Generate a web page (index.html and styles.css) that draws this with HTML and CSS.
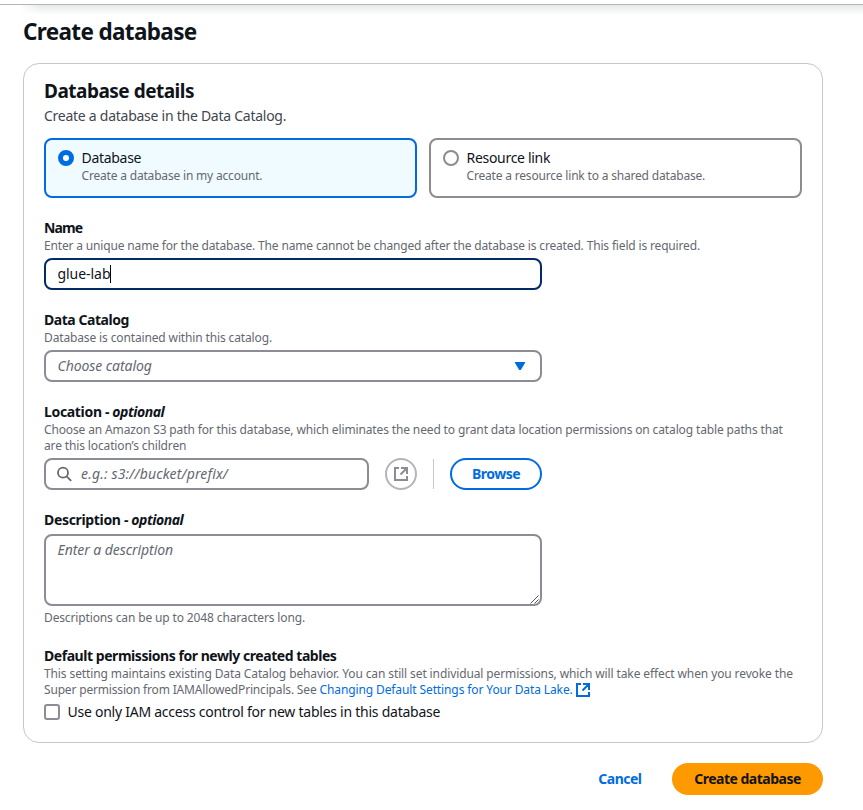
FILE: index.html
```html
<!DOCTYPE html>
<html lang="en">
<head>
<meta charset="utf-8">
<title>Create database</title>
<link rel="stylesheet" href="styles.css">
</head>
<body>
<div class="topbar"></div>
<div class="topshade"></div>
<main class="page">
  <h1 class="title">Create database</h1>
  <section class="panel">
    <header class="panel-header">
      <h2 class="panel-title">Database details</h2>
      <p class="panel-desc">Create a database in the Data Catalog.</p>
    </header>
    <div class="tiles">
      <div class="tile tile-selected">
        <span class="radio radio-on"></span>
        <div><div class="tile-label">Database</div><div class="hint tile-hint">Create a database in my account.</div></div>
      </div>
      <div class="tile">
        <span class="radio"></span>
        <div><div class="tile-label">Resource link</div><div class="hint tile-hint">Create a resource link to a shared database.</div></div>
      </div>
    </div>
    <div class="field">
      <div class="label label-short">Name</div>
      <div class="hint hint-required">Enter a unique name for the database. The name cannot be changed after the database is created. This field is required.</div>
      <div class="control focused"><span>glue-lab</span><span class="caret"></span></div>
    </div>
    <div class="field">
      <div class="label">Data Catalog</div>
      <div class="hint">Database is contained within this catalog.</div>
      <div class="control select"><span class="placeholder">Choose catalog</span><svg class="arrow" width="10" height="8" viewBox="0 0 10 8"><path d="M0 0h10v1L5.8 8H4.2L0 1z" fill="#006ce0"/></svg></div>
    </div>
    <div class="field">
      <div class="label"><span class="prefix">Location -</span> <em>optional</em></div>
      <div class="hint">Choose an Amazon S3 path for this database, which eliminates the need to grant data location permissions on catalog table paths that<br>are this location’s children</div>
      <div class="location">
        <div class="control search"><svg width="16" height="16" viewBox="0 0 16 16" fill="none" stroke="#656871" stroke-width="1.8"><circle cx="7" cy="6.7" r="5"/><path d="M10.6 10.3l4.6 4.5"/></svg><span class="placeholder path">e.g.: s3://bucket/prefix/</span></div>
        <div class="round"><svg width="16" height="16" viewBox="0 0 16 16" fill="none" stroke="currentColor" stroke-width="2"><path d="M6 2H2v12h12v-4M8 2h6v6M14 2L7.5 8.5"/></svg></div>
        <div class="divider"></div>
        <div class="browse">Browse</div>
      </div>
    </div>
    <div class="field">
      <div class="label"><span class="prefix">Description -</span> <em>optional</em></div>
      <div class="control area"><span class="placeholder">Enter a description</span><svg class="grip" width="9" height="9" viewBox="0 0 9 9" stroke="#555" stroke-width="1"><path d="M.5 8.5l8-8M4.5 8.5l4-4"/></svg></div>
      <div class="hint">Descriptions can be up to 2048 characters long.</div>
    </div>
    <div class="field">
      <div class="label">Default permissions for newly created tables</div>
      <div class="hint hint-permissions">This setting maintains existing Data Catalog behavior. You can still set individual permissions, which will take effect when you revoke the<br><span class="tight">Super permission from IAMAllowedPrincipals. See</span> <a class="link">Changing Default Settings for Your Data Lake.<svg class="external" width="16" height="16" viewBox="0 0 16 16" fill="none" stroke="currentColor" stroke-width="2"><path d="M6 2H2v12h12v-4M8 2h6v6M14 2L7.5 8.5"/></svg></a></div>
      <div class="check"><span class="box"></span><span>Use only IAM access control for new tables in this database</span></div>
    </div>
  </section>
  <footer class="actions">
    <a class="cancel">Cancel</a>
    <div class="primary">Create database</div>
  </footer>
</main>
</body>
</html>
```
FILE: styles.css
```css
* { box-sizing: border-box; }
body { margin: 0; background: #fff; color: #0f141a; font: 14px/20px "Noto Sans", sans-serif; white-space: nowrap; }
h1, h2, p { margin: 0; }
.topbar { height: 5px; border-bottom: 1px solid #b4b4bb; }
.topshade { height: 10px; margin: 0 0 -10px 20px; background: linear-gradient(#e6e9e9, #fff); -webkit-mask-image: linear-gradient(90deg, transparent, #000 20px); mask-image: linear-gradient(90deg, transparent, #000 20px); }
.page { position: relative; padding: 12px 40px 0 23px; }
.title { font-size: 22.5px; line-height: 30px; letter-spacing: -0.65px; }
.panel { display: flex; flex-direction: column; gap: 20px; margin-top: 16px; height: 680px; padding: 15px 20px 20px; border: 1px solid #c6c6cd; border-radius: 16px; }
.panel-title { font-size: 19px; line-height: 24px; letter-spacing: -0.5px; }
.panel-header { margin-bottom: -8px; }
.panel-desc { margin-top: 3px; color: #424650; letter-spacing: -0.26px; }
.tiles { display: grid; grid-template-columns: 1fr 1fr; gap: 12px; }
.tile { display: flex; gap: 7.5px; height: 60px; padding: 8px 12px; border: 2px solid #8c8c94; border-radius: 8px; }
.tile-selected { border-color: #006ce0; background: #f0fbff; }
.tile-label { letter-spacing: -0.3px; }
.radio { width: 16px; height: 16px; margin-top: 2px; border: 2px solid #8c8c94; border-radius: 50%; }
.radio-on { border: 5px solid #006ce0; background: #fff; }
.hint { font-size: 12px; line-height: 16px; color: #656871; letter-spacing: -0.135px; }
.tile-hint { letter-spacing: -0.185px; }
.hint-required { letter-spacing: -0.161px; }
.hint-permissions { letter-spacing: -0.111px; }
.tight { letter-spacing: -0.172px; }
.label { font-weight: 700; letter-spacing: -0.45px; }
.label-short { letter-spacing: -0.85px; }
.prefix { letter-spacing: -0.33px; }
.control { display: flex; align-items: center; width: 498px; height: 32px; margin-top: 4px; padding: 0 12px 0 11.5px; border: 2px solid #8c8c94; border-radius: 8px; }
.focused { border-color: #002b66; letter-spacing: -0.05px; }
.caret { width: 1px; height: 18px; background: #000; }
.placeholder { color: #656871; font-style: italic; letter-spacing: -0.06px; }
.path { letter-spacing: 0.167px; }
.select { justify-content: space-between; padding-right: 15px; }
.location { display: flex; align-items: center; margin-top: 4px; }
.search { width: 325px; margin: 0; padding-left: 10px; gap: 9px; }
.round { display: grid; place-items: center; width: 32px; height: 32px; margin-left: 16px; border: 2px solid #b4b4bb; border-radius: 50%; color: #8c8c94; }
.divider { width: 1px; height: 30px; margin: 0 16px; background: #c6c6cd; }
.browse { width: 92px; height: 32px; border: 2px solid #006ce0; border-radius: 16px; color: #006ce0; font-weight: 700; text-align: center; line-height: 28px; letter-spacing: -0.5px; }
.area { position: relative; align-items: flex-start; height: 72px; padding-top: 4px; margin-bottom: 4px; }
.grip { position: absolute; right: 1px; bottom: 0; }
.link { color: #006ce0; }
.external { vertical-align: top; margin-left: 2px; }
.check { display: flex; align-items: center; gap: 7.5px; margin-top: 4px; letter-spacing: -0.25px; }
.box { width: 16px; height: 16px; border: 2px solid #8c8c94; border-radius: 3px; }
.actions { display: flex; justify-content: flex-end; align-items: center; margin-top: 20px; font-weight: 700; letter-spacing: -0.5px; }
.cancel { margin-right: 30.5px; color: #006ce0; }
.primary { width: 151px; height: 32px; line-height: 32px; text-align: center; border-radius: 16px; background: #ff9900; }
```
